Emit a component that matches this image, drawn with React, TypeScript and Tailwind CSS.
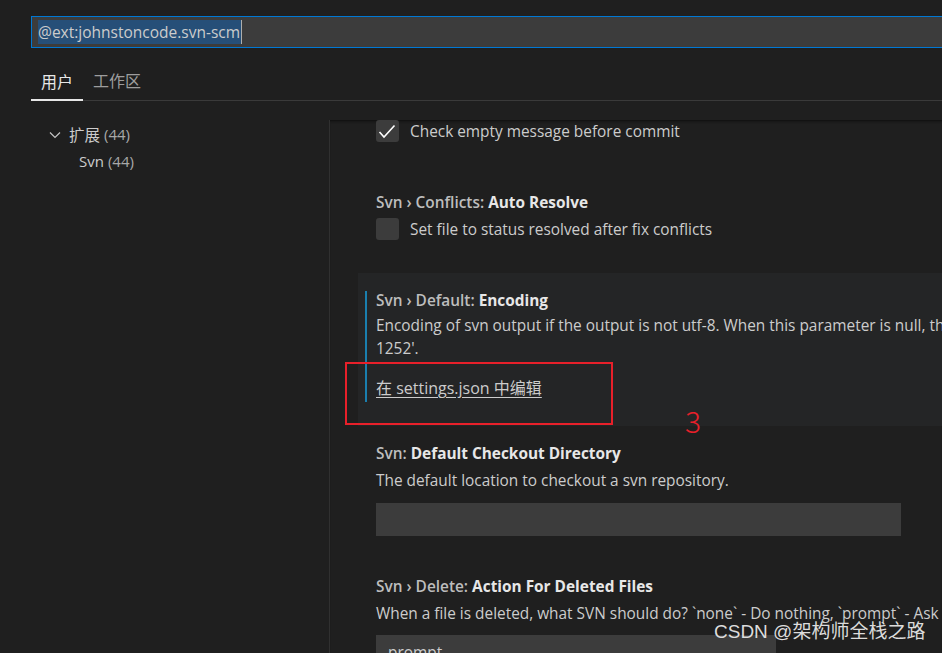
import React from "react";

const ui = { fontFamily: '"Open Sans", "Noto Sans CJK SC", sans-serif' };
const cjk = { fontFamily: '"Noto Sans CJK SC", "Noto Sans", sans-serif' };

function Checkbox({ checked }: { checked?: boolean }) {
  return (
    <div className="flex h-[22px] w-[23px] shrink-0 items-center justify-center rounded-[3px] bg-[#3c3c3c]">
      {checked && (
        <svg width="23" height="22" viewBox="0 0 23 22">
          <path d="M3.5 12 L8 17 L18.5 5.5" fill="none" stroke="#ffffff" strokeWidth="1.6" />
        </svg>
      )}
    </div>
  );
}

function Title({ prefix, name }: { prefix: string; name: string }) {
  return (
    <div className="whitespace-nowrap leading-[20px]">
      <span className="font-semibold text-[#bdbdbd]">{prefix}</span>
      <span className="font-bold text-[#e7e7e7]">{name}</span>
    </div>
  );
}

export default function App() {
  return (
    <div className="relative h-[653px] w-[942px] overflow-hidden bg-[#1f1f1f] text-[#cccccc]" style={ui}>
      {/* search */}
      <div className="pl-[31px] pt-[16px]">
        <div className="flex h-[32px] w-[930px] items-center border border-[#0078d4] bg-[#3c3c3c] pl-[6px]">
          <span className="h-[24px] bg-[#264f78] pr-[1px] text-[15.5px] leading-[24px] text-[#cccccc]">
            @ext:johnstoncode.svn-scm
          </span>
          <span className="h-[24px] w-[1px] bg-[#aeafad]" />
        </div>
      </div>

      {/* tabs */}
      <div className="ml-[31px] flex h-[53px] items-end border-b border-[#3a3a3a]" style={cjk}>
        <div className="-mb-px border-b-2 border-[#e7e7e7] px-[10px] pb-[7px] text-[16px] leading-[22px] text-[#e7e7e7]">
          用户
        </div>
        <div className="px-[10px] pb-[9px] text-[16px] leading-[22px] text-[#9d9d9d]">工作区</div>
      </div>

      <div className="flex">
        {/* tree */}
        <div className="w-[329px] shrink-0 pt-[20px] text-[15px]">
          <div className="flex h-[27px] items-center pl-[49px]">
            <svg width="12" height="12" viewBox="0 0 12 12" className="mr-[8px]">
              <path d="M1 3.5 L6 8.5 L11 3.5" fill="none" stroke="#c5c5c5" strokeWidth="1.2" />
            </svg>
            <span style={cjk} className="text-[15.5px] text-[#cccccc]">扩展</span>
            <span className="ml-[4px] text-[#a8a8a8]">(44)</span>
          </div>
          <div className="flex h-[27px] items-center pl-[79px]">
            <span className="text-[#cccccc]">Svn</span>
            <span className="ml-[4px] text-[#a8a8a8]">(44)</span>
          </div>
        </div>

        {/* settings list */}
        <div className="mt-[19px] h-[540px] flex-1 overflow-hidden border-l border-[#303030] text-[15.4px] shadow-[inset_0_3px_3px_-2px_#0c0c0c]">
          <div className="pl-[46px]">
            <div className="flex items-center gap-[11px]">
              <Checkbox checked />
              <span className="h-[22px] whitespace-nowrap leading-[24px]">Check empty message before commit</span>
            </div>

            <div className="mt-[51px]">
              <Title prefix="Svn › Conflicts: " name="Auto Resolve" />
              <div className="mt-[5px] flex items-center gap-[11px]">
                <Checkbox />
                <span className="h-[22px] whitespace-nowrap leading-[24px]">Set file to status resolved after fix conflicts</span>
              </div>
            </div>
          </div>

          {/* focused item */}
          <div className="ml-[28px] mt-[33px] bg-[#242526] pb-[24px] pl-[7px] pt-[18px]">
            <div className="border-l-2 border-[#1a7fae] pb-[2px] pl-[9px]">
              <Title prefix="Svn › Default: " name="Encoding" />
              <div className="mt-[3px] whitespace-nowrap leading-[23px]">
                Encoding of svn output if the output is not utf-8. When this parameter is null, the encoding is automatically detected. Example: 'windows-
              </div>
              <div className="leading-[23px]">1252'.</div>
              <div className="mt-[17px] leading-[22px]">
                <a className="text-[16px] text-[#cccccc] underline underline-offset-[3px]">在 settings.json 中编辑</a>
              </div>
            </div>
          </div>

          <div className="pl-[46px]">
            <div className="pt-[18px]">
              <Title prefix="Svn: " name="Default Checkout Directory" />
              <div className="mt-[5px] whitespace-nowrap leading-[23px]">The default location to checkout a svn repository.</div>
              <div className="mt-[11px] h-[33px] w-[525px] bg-[#3c3c3c]" />
            </div>

            <div className="mt-[41px]">
              <Title prefix="Svn › Delete: " name="Action For Deleted Files" />
              <div className="mt-[5px] whitespace-nowrap leading-[23px]">
                When a file is deleted, what SVN should do? `none` - Do nothing, `prompt` - Ask the action, `remove` - Remove without prompt
              </div>
              <div className="mt-[10px] flex h-[33px] w-[400px] items-start justify-between bg-[#3c3c3c] pl-[12px] pr-[12px] pt-[7px]">
                <span className="leading-[22px]">prompt</span>
                <svg width="12" height="12" viewBox="0 0 12 12" className="mt-[8px]">
                  <path d="M1 3.5 L6 8.5 L11 3.5" fill="none" stroke="#c5c5c5" strokeWidth="1.2" />
                </svg>
              </div>
            </div>
          </div>
        </div>
      </div>

      {/* annotation */}
      <div className="absolute left-[345px] top-[362px] h-[63px] w-[268px] border-2 border-[#e8202a]" />
      <div className="absolute left-[685px] top-[404px] text-[30px] font-light leading-[32px] text-[#e8202a]" style={cjk}>
        3
      </div>

      {/* watermark */}
      <div
        className="absolute left-[714px] top-[620px] whitespace-nowrap text-[19px] leading-[24px] text-[#dcdcdc]"
        style={{ fontFamily: '"Liberation Sans", "Noto Sans CJK SC", sans-serif' }}
      >
        CSDN @架构师全栈之路
      </div>
    </div>
  );
}
